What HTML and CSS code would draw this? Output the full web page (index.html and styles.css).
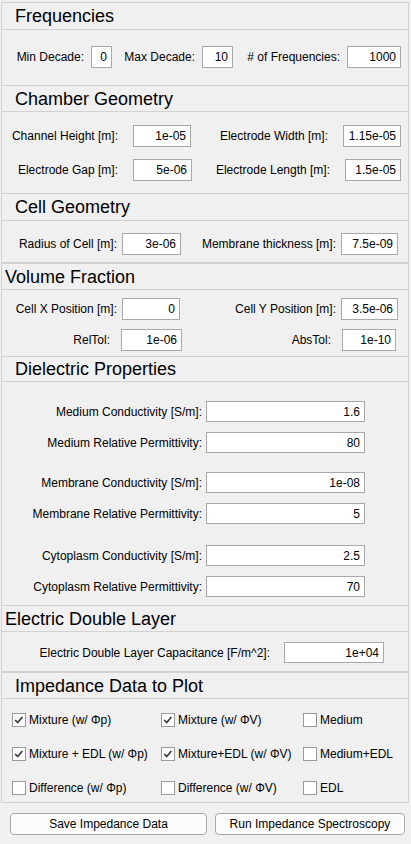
FILE: index.html
```html
<!DOCTYPE html>
<html>
<head>
<meta charset="utf-8">
<title>Impedance Spectroscopy</title>
<link rel="stylesheet" href="styles.css">
</head>
<body>
<div class="app">
  <div class="frame">
    <section class="panel p-freq">
      <div class="title">Frequencies</div>
      <div class="body">
        <div class="row r-freq">
          <div class="lbl">Min Decade:</div><div class="field">0</div>
          <div class="lbl">Max Decade:</div><div class="field">10</div>
          <div class="lbl"># of Frequencies:</div><div class="field">1000</div>
        </div>
      </div>
    </section>

    <section class="panel p-chamber">
      <div class="title">Chamber Geometry</div>
      <div class="body">
        <div class="row r-ch1">
          <div class="lbl">Channel Height [m]:</div><div class="field">1e-05</div>
          <div class="lbl">Electrode Width [m]:</div><div class="field">1.15e-05</div>
        </div>
        <div class="row r-ch2">
          <div class="lbl">Electrode Gap [m]:</div><div class="field">5e-06</div>
          <div class="lbl">Electrode Length [m]:</div><div class="field">1.5e-05</div>
        </div>
      </div>
    </section>

    <section class="panel p-cell">
      <div class="title">Cell Geometry</div>
      <div class="body">
        <div class="row r-cell">
          <div class="lbl">Radius of Cell [m]:</div><div class="field">3e-06</div>
          <div class="lbl">Membrane thickness [m]:</div><div class="field">7.5e-09</div>
        </div>
      </div>
    </section>

    <section class="panel p-vol">
      <div class="title">Volume Fraction</div>
      <div class="body">
        <div class="row r-vol1">
          <div class="lbl">Cell X Position [m]:</div><div class="field">0</div>
          <div class="lbl">Cell Y Position [m]:</div><div class="field">3.5e-06</div>
        </div>
        <div class="row r-vol2">
          <div class="lbl">RelTol:</div><div class="field">1e-06</div>
          <div class="lbl">AbsTol:</div><div class="field">1e-10</div>
        </div>
      </div>
    </section>

    <section class="panel p-diel">
      <div class="title">Dielectric Properties</div>
      <div class="body">
        <div class="group">
          <div class="row r-diel">
            <div class="lbl">Medium Conductivity [S/m]:</div><div class="field">1.6</div>
          </div>
          <div class="row r-diel">
            <div class="lbl">Medium Relative Permittivity:</div><div class="field">80</div>
          </div>
        </div>
        <div class="group">
          <div class="row r-diel">
            <div class="lbl">Membrane Conductivity [S/m]:</div><div class="field">1e-08</div>
          </div>
          <div class="row r-diel">
            <div class="lbl">Membrane Relative Permittivity:</div><div class="field">5</div>
          </div>
        </div>
        <div class="group g-last">
          <div class="row r-diel">
            <div class="lbl">Cytoplasm Conductivity [S/m]:</div><div class="field">2.5</div>
          </div>
          <div class="row r-diel">
            <div class="lbl">Cytoplasm Relative Permittivity:</div><div class="field">70</div>
          </div>
        </div>
      </div>
    </section>

    <section class="panel p-edl">
      <div class="title">Electric Double Layer</div>
      <div class="body">
        <div class="row r-edl">
          <div class="lbl">Electric Double Layer Capacitance [F/m^2]:</div><div class="field">1e+04</div>
        </div>
      </div>
    </section>

    <section class="panel p-imp">
      <div class="title">Impedance Data to Plot</div>
      <div class="body">
        <div class="checks">
          <div class="chk"><span class="box on"><svg viewBox="0 0 14 14"><polyline points="2.5,7 5.5,10 11,3.5"/></svg></span><span>Mixture (w/ Φp)</span></div>
          <div class="chk"><span class="box on"><svg viewBox="0 0 14 14"><polyline points="2.5,7 5.5,10 11,3.5"/></svg></span><span>Mixture (w/ ΦV)</span></div>
          <div class="chk"><span class="box"></span><span>Medium</span></div>

          <div class="chk"><span class="box on"><svg viewBox="0 0 14 14"><polyline points="2.5,7 5.5,10 11,3.5"/></svg></span><span>Mixture + EDL (w/ Φp)</span></div>
          <div class="chk"><span class="box on"><svg viewBox="0 0 14 14"><polyline points="2.5,7 5.5,10 11,3.5"/></svg></span><span>Mixture+EDL (w/ ΦV)</span></div>
          <div class="chk"><span class="box"></span><span>Medium+EDL</span></div>

          <div class="chk"><span class="box"></span><span>Difference (w/ Φp)</span></div>
          <div class="chk"><span class="box"></span><span>Difference (w/ ΦV)</span></div>
          <div class="chk"><span class="box"></span><span>EDL</span></div>
        </div>
      </div>
    </section>
  </div>

  <div class="buttons">
    <button class="btn b-save">Save Impedance Data</button>
    <button class="btn b-run">Run Impedance Spectroscopy</button>
  </div>
</div>
</body>
</html>
```

FILE: styles.css
```css
* { box-sizing: border-box; }

html, body {
  margin: 0;
  padding: 0;
  background: #f0f0f0;
}

body {
  font-family: "Liberation Sans", Arial, sans-serif;
  font-size: 12px;
  color: #000;
}

.app {
  width: 411px;
  height: 844px;
  padding-top: 2px;
  padding-left: 1px;
}

.frame {
  width: 408px;
  border: 1px solid #d2d2d2;
}

.panel {
  border-bottom: 1px solid #d2d2d2;
}
.panel:last-child { border-bottom: none; }

.title {
  font-size: 18px;
  line-height: 1;
  display: flex;
  align-items: center;
  padding-left: 13px;
  border-bottom: 1px solid #d2d2d2;
  height: 26px;
}

.body {
  display: flex;
  flex-direction: column;
}

.row {
  display: grid;
  align-items: center;
  height: 22px;
}

.lbl {
  text-align: right;
  padding-right: var(--pr, 8px);
  white-space: nowrap;
}

.field {
  height: 100%;
  background: #fff;
  border: 1px solid #a8a8a8;
  text-align: right;
  padding-right: 4px;
  display: flex;
  align-items: center;
  justify-content: flex-end;
  white-space: nowrap;
}

/* Frequencies */
.p-freq .title { height: 27px; }
.p-freq .body { height: 55px; padding-top: 16px; }
.r-freq { grid-template-columns: 89px 21px 90px 31px 114px 54px; --pr: 7px; }

/* Chamber Geometry */
.p-chamber .title { height: 26px; }
.p-chamber .body { height: 81px; padding-top: 13px; gap: 12px; }
.r-ch1 { grid-template-columns: 131px 58px 152px 58px; --pr: 15px; }
.r-ch2 { grid-template-columns: 131px 59px 153px 56px; --pr: 15px; }

/* Cell Geometry */
.p-cell { border-bottom-width: 2px; }
.p-cell .title { height: 27px; }
.p-cell .body { height: 41px; padding-top: 12px; }
.r-cell { grid-template-columns: 120px 59px 160px 57px; --pr: 5px; }

/* Volume Fraction */
.p-vol .title { height: 26px; padding-left: 3px; }
.p-vol .body { height: 66px; padding-top: 8px; gap: 9px; }
.r-vol1 { grid-template-columns: 120px 58px 161px 57px; --pr: 5px; }
.r-vol2 { grid-template-columns: 119px 61px 160px 54px; --pr: 11px; }

/* Dielectric Properties */
.p-diel .title { height: 25px; }
.p-diel .body { height: 223px; padding-top: 19px; gap: 19px; }
.p-diel .group { display: flex; flex-direction: column; gap: 10px; }
.p-diel .g-last { margin-top: 2px; }
.r-diel { grid-template-columns: 204px 159px; height: 21px; --pr: 4px; }

/* Electric Double Layer */
.p-edl { border-bottom-width: 2px; }
.p-edl .title { height: 26px; padding-left: 3px; }
.p-edl .body { height: 39px; padding-top: 10px; }
.r-edl { grid-template-columns: 282px 100px; height: 21px; --pr: 14px; }

/* Impedance Data to Plot */
.p-imp .title { height: 26px; }
.p-imp .body { height: 103px; padding-top: 14px; padding-left: 10px; }

.checks {
  display: grid;
  grid-template-columns: 149px 142px 100px;
  grid-template-rows: 14px 14px 14px;
  row-gap: 20px;
}

.chk {
  display: flex;
  align-items: center;
  gap: 3px;
  height: 14px;
  white-space: nowrap;
}

.box {
  width: 14px;
  height: 14px;
  flex: none;
  background: #fff;
  border: 1px solid #9a9a9a;
  display: flex;
  align-items: center;
  justify-content: center;
}
.box svg {
  width: 12px;
  height: 12px;
  fill: none;
  stroke: #3a3a3a;
  stroke-width: 2;
}

/* Buttons */
.buttons {
  display: flex;
  margin-top: 10px;
  padding-left: 9px;
  gap: 8px;
}

.btn {
  font-family: "Liberation Sans", Arial, sans-serif;
  font-size: 12px;
  color: #000;
  height: 22px;
  background: #fcfcfc;
  border: 1px solid #a9a9a9;
  border-radius: 4px;
  padding: 0;
}
.b-save { width: 197px; }
.b-run { width: 190px; }
```
